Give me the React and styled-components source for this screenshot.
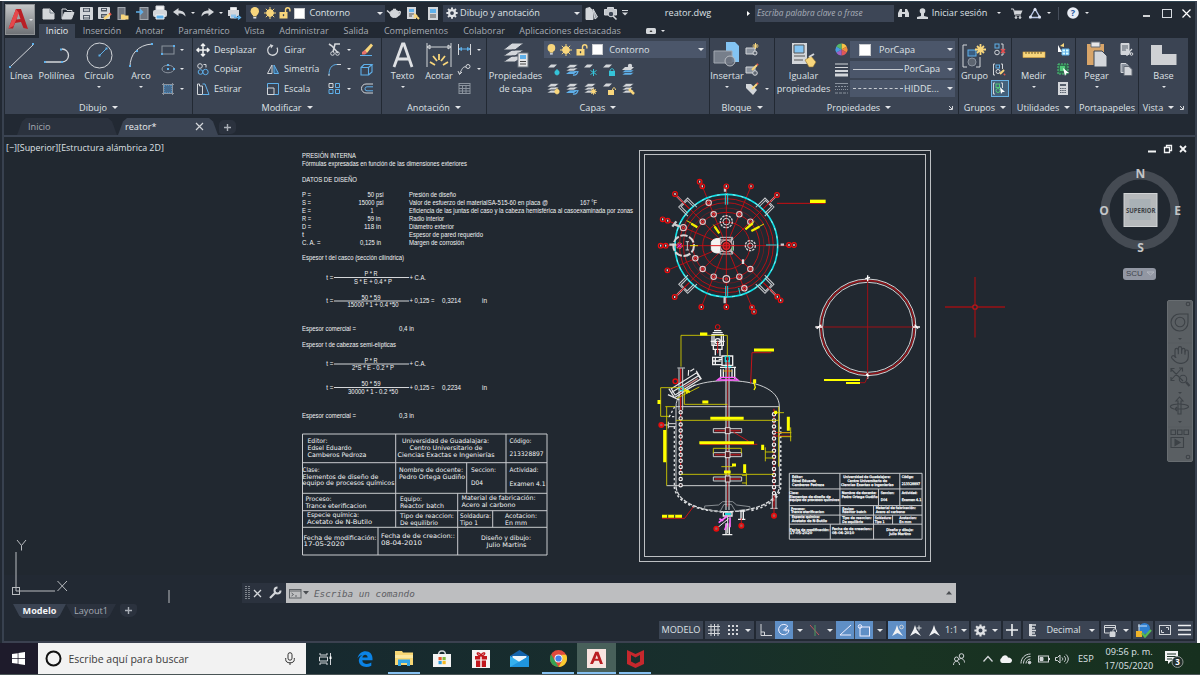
import React from "react";
import styled, { createGlobalStyle, css } from "styled-components";
import { Hand } from "lucide-react";

const L = "#d3d6da";
const B = "#5fb0ea";
const Y = "#f8d67c";
const G = "#8b939e";

const GlobalStyle = createGlobalStyle`
  * { box-sizing: border-box; }
  body {
    margin: 0;
    width: 1200px;
    height: 676px;
    overflow: hidden;
    background: #fff;
    font-family: "Open Sans", "Noto Sans", sans-serif;
  }
  svg { display: block; flex: none; overflow: visible; }
`;
const Desktop = styled.div`
  width: 1200px;
  height: 676px;
  display: flex;
  flex-direction: column;
  padding-top: 1px;
  background: #fff;
  color: #dfe2e6;
  font-size: 9.15px;
  line-height: 12px;
  white-space: nowrap;
`;
const AppWindow = styled.div`
  margin-left: 2px;
  width: 1195px;
  height: 642px;
  display: flex;
  flex-direction: column;
  background: #222933;
  border-left: 2px solid #38414f;
  border-right: 2px solid #38414f;
  border-bottom: 2px solid #3b4150;
  box-shadow: -2px 0 0 #222933;
  clip-path: inset(0 0 0 -2px);
`;
const Header = styled.header`
  display: flex;
  height: 37px;
  flex: none;
  border-top: 1px solid #2d4251;
`;
const AppLogo = styled.div`
  width: 30px;
  height: 31px;
  margin: 2px 4px 0 1px;
  background: linear-gradient(#c3c5c7, #6f7276);
  border: 1px solid #8f9295;
  display: flex;
  align-items: center;
  justify-content: center;
`;
const HeaderRows = styled.div`
  flex: 1;
  display: flex;
  flex-direction: column;
`;
const QuickBar = styled.div`
  height: 22px;
  display: flex;
  align-items: center;
`;
const Slot = styled.div`
  width: ${(p) => p.$w}px;
  flex: none;
  display: flex;
  align-items: center;
  justify-content: center;
`;
const Spacer = styled.div`
  flex: 1;
`;
const Caret = styled.i`
  width: 0;
  height: 0;
  flex: none;
  border: ${(p) => p.$s || 2}px solid transparent;
  border-top-color: #e4e6e9;
  border-bottom: 0;
`;
const QuickCombo = styled.div`
  width: 139px;
  height: 17px;
  flex: none;
  display: flex;
  align-items: center;
  gap: 2px;
  padding: 0 2px 0 3px;
  background: #363f4f;
  font-size: 9.2px;
`;
const SearchBox = styled.div`
  width: 139px;
  height: 17px;
  flex: none;
  margin-left: 5px;
  padding-left: 2px;
  line-height: 16px;
  background: #3d4656;
  color: #a9afb9;
  font-style: italic;
  font-size: 8.3px;
`;
const Divider = styled.div`
  width: 1px;
  height: 13px;
  background: #454d5a;
`;
const TabRow = styled.nav`
  display: flex;
  height: 14px;
  color: #a6abb3;
  font-size: 9px;
`;
const RibbonTab = styled.div`
  width: ${(p) => p.$w}px;
  height: 14px;
  line-height: 14px;
  text-align: center;
  flex: none;
  ${(p) => p.$active && css`
    background: #3b4453;
    color: #eceef0;
  `}
`;
const Ribbon = styled.section`
  display: flex;
  gap: 1px;
  height: 76px;
  flex: none;
  padding-left: 1px;
`;
const Panel = styled.div`
  width: ${(p) => p.$w}px;
  flex: none;
  display: flex;
  flex-direction: column;
  background: #3b4453;
`;
const PanelBody = styled.div`
  display: flex;
  height: 63px;
  padding: 2px 0 0 ${(p) => p.$pad || 0}px;
`;
const PanelTitle = styled.div`
  height: 13px;
  display: flex;
  align-items: center;
  justify-content: center;
  gap: 5px;
  line-height: 13px;
  padding-bottom: 1px;
`;
const BigToolBox = styled.div`
  width: ${(p) => p.$w}px;
  flex: none;
  display: flex;
  flex-direction: column;
  align-items: center;
  text-align: center;
`;
const BigIcon = styled.div`
  height: 30px;
  display: flex;
  align-items: center;
`;
const BigLabel = styled.div`
  line-height: 12.5px;
  margin-bottom: 3px;
`;
const Column = styled.div`
  width: ${(p) => p.$w}px;
  flex: none;
  display: flex;
  flex-direction: column;
`;
const Cell = styled.div`
  height: 19.5px;
  display: flex;
  align-items: center;
  justify-content: ${(p) => (p.$left ? "flex-start" : "center")};
  gap: 5px;
`;
const IconRow = styled.div`
  display: grid;
  grid-template-columns: repeat(5, 18.8px);
  height: 19.5px;
  align-items: center;
  justify-items: center;
`;
const Combo = styled.div`
  height: 17px;
  width: ${(p) => p.$w}px;
  margin: 1px 0 1.5px;
  padding: 0 2px 0 3px;
  display: flex;
  align-items: center;
  gap: ${(p) => p.$gap || 0}px;
  background: #4b566a;
`;
const Swatch = styled.span`
  width: ${(p) => p.$s || 11}px;
  height: ${(p) => p.$s || 11}px;
  background: #fff;
  border: 1px solid #c9cbce;
  flex: none;
`;
const LineSample = styled.span`
  width: 50px;
  border-top: 1px ${(p) => (p.$dashed ? "dashed" : "solid")} #c6cad0;
`;
const ActiveTool = styled.div`
  width: 18px;
  height: 17px;
  display: flex;
  align-items: center;
  justify-content: center;
  background: #45617b;
  border: 1px solid #69b2e4;
`;
const DocTabs = styled.div`
  height: 21px;
  flex: none;
  display: flex;
  align-items: flex-end;
  padding-left: 13px;
`;
const DocTab = styled.div`
  width: ${(p) => p.$w}px;
  height: 17px;
  margin-right: 1px;
  display: flex;
  align-items: center;
  justify-content: space-between;
  padding: 0 ${(p) => (p.$active ? 15 : 6)}px 0 ${(p) => p.$pad}px;
  background: ${(p) => (p.$active ? "#3b4453" : "#2b323e")};
  color: ${(p) => (p.$active ? "#eceef0" : "#a6abb3")};
  clip-path: polygon(0 100%, 5px 20%, 9px 0, calc(100% - 9px) 0, calc(100% - 5px) 20%, 100% 100%);
`;
const AddTab = styled.div`
  width: 17px;
  height: 14px;
  margin-bottom: 1px;
  border-radius: 5px 5px 5px 2px;
  background: #2b323e;
  display: flex;
  align-items: center;
  justify-content: center;
`;
const Canvas = styled.main`
  position: relative;
  height: 440px;
  flex: none;
  border-top: 2px solid #3b4453;
  background: #212830;
`;
const ViewLabel = styled.div`
  position: absolute;
  left: 2px;
  top: 5px;
  font-size: 8.9px;
`;
const Overlay = styled.div`
  position: absolute;
  left: ${(p) => p.$x}px;
  top: ${(p) => p.$y}px;
`;
const NavBar = styled.div`
  position: absolute;
  left: 1163px;
  top: 163px;
  width: 26px;
  height: 162px;
  border-radius: 2px;
  background: #5a5f63;
  border: 1px solid #686d71;
`;
const CommandLine = styled.div`
  position: absolute;
  left: 238px;
  top: 446px;
  width: 714px;
  height: 20px;
  display: flex;
`;
const CommandGrip = styled.div`
  width: 44px;
  display: flex;
  align-items: center;
  gap: 4px;
  padding-left: 3px;
  background: #2b323e;
`;
const CommandInput = styled.div`
  flex: 1;
  display: flex;
  align-items: center;
  gap: 2px;
  padding: 0 4px 0 3px;
  background: #bdbec0;
  color: #5d6064;
  font: italic 9.3px "DejaVu Sans Mono", monospace;
`;
const LayoutTabs = styled.div`
  display: flex;
  height: 46px;
  padding: 29px 0 0 9px;
  flex: none;
`;
const LayoutTab = styled.div`
  width: ${(p) => p.$w}px;
  height: 14px;
  line-height: 13px;
  text-align: center;
  font-weight: ${(p) => (p.$active ? 700 : 400)};
  color: ${(p) => (p.$active ? "#f4f5f6" : "#a6abb3")};
  background: ${(p) => (p.$active ? "#3b4453" : "#2b323e")};
  clip-path: polygon(0 0, 100% 0, calc(100% - 6px) 80%, calc(100% - 9px) 100%, 9px 100%, 6px 80%);
`;
const AddLayout = styled.div`
  width: 17px;
  height: 13px;
  margin-left: 4px;
  border-radius: 2px 3px 7px 7px;
  background: #2b323e;
  display: flex;
  align-items: center;
  justify-content: center;
`;
const StatusBar = styled.footer`
  display: flex;
  gap: 2px;
  justify-content: flex-end;
  height: 18px;
  padding-right: 2px;
  flex: none;
`;
const StatusGroup = styled.div`
  display: flex;
  align-items: center;
  height: 18px;
  background: #3b4453;
`;
const StatusItem = styled.div`
  width: ${(p) => p.$w}px;
  height: 18px;
  display: flex;
  align-items: center;
  justify-content: center;
  gap: 3px;
  background: ${(p) => (p.$on ? "#5f8fc6" : "transparent")};
`;
const Taskbar = styled.div`
  display: flex;
  height: 32px;
  flex: none;
  font-size: 10.5px;
  border-bottom: 1px solid #4a5556;
  background: linear-gradient(90deg, #17292f 306px, #182f2c 700px, #193323 900px, #17301f);
`;
const StartButton = styled.div`
  width: 37.5px;
  background: #1e1b2b;
  display: flex;
  align-items: center;
  justify-content: center;
`;
const TaskSearch = styled.div`
  width: 268.5px;
  background: #f2f2f2;
  color: #3b3b3b;
  display: flex;
  align-items: center;
  gap: 7px;
  padding: 0 11px 0 7px;
`;
const TaskItem = styled.div`
  width: ${(p) => p.$w || 38.75}px;
  height: 31px;
  flex: none;
  display: flex;
  align-items: center;
  justify-content: center;
  background: ${(p) => (p.$on ? "#48605a" : "transparent")};
  box-shadow: ${(p) => (p.$run ? "inset 0 -2px 0 #86c0f0" : "none")};
  margin: ${(p) => (p.$run && !p.$on ? "0 3px" : "0")};
`;
const Language = styled.div`
  width: 22px;
  line-height: 31px;
  font-size: 9.2px;
`;
const Clock = styled.div`
  width: 58px;
  text-align: center;
  font-size: 9.2px;
  line-height: 14px;
  padding-top: 2px;
`;

const Ico = ({ w = 14, h = w, children }) => (
  <svg width={w} height={h} viewBox={`0 0 ${w} ${h}`} fill="none" stroke={L} strokeWidth="1">
    {children}
  </svg>
);

const Bulb = ({ s = 11 }) => (
  <svg width={s * 0.8} height={s} viewBox="0 0 9 12">
    <circle cx="4.5" cy="4.3" r="4.2" fill={Y} />
    <path d="M2.6 7h3.8v2.4H2.6z" fill={Y} />
    <path d="M3 10h3v1.5H3z" fill="#dfe2e6" />
  </svg>
);
const Sun = ({ s = 11 }) => (
  <svg width={s} height={s} viewBox="0 0 12 12" stroke={Y} strokeWidth="1">
    <circle cx="6" cy="6" r="3.4" fill={Y} />
    <path d="M6 0v12M0 6h12M1.8 1.8l8.4 8.4M10.2 1.8l-8.4 8.4" />
  </svg>
);
const Lock = ({ s = 11, c = Y }) => (
  <svg width={s} height={s} viewBox="0 0 12 12">
    <path d="M6.5 6V3a2.2 2.2 0 0 1 4.4 0v1.6" fill="none" stroke={c} strokeWidth="1.4" />
    <rect x="0.5" y="5" width="8" height="6.5" fill={c} />
    <path d="M4.5 7.2v2" stroke="#3b4453" strokeWidth="1.3" />
  </svg>
);
const Gear = ({ s = 13 }) => (
  <svg width={s} height={s} viewBox="0 0 16 16" fill="none" stroke="#e1e3e6">
    <circle cx="8" cy="8" r="4" strokeWidth="3" />
    <g strokeWidth="2.6">
      <path d="M8 .5V3M8 13v2.5M.5 8H3M13 8h2.5M2.7 2.7l1.8 1.8M11.5 11.5l1.8 1.8M2.7 13.3l1.8-1.8M11.5 4.5l1.8-1.8" />
    </g>
  </svg>
);
const Logo = () => (
  <svg width="21" height="23" viewBox="0 0 21 23">
    <path d="M8 1h5l7 20-4.500-1-2.500-6-6 1-2 5.500H.5z" fill="#b91f25" />
    <path d="M.5 20.500 8 1l3 4-5.500 13z" fill="#e5484c" />
    <path d="M10.500 5.500l2 5.500-4 .6z" fill="#a2a4a6" />
  </svg>
);
const Plus = () => (
  <Ico w={7}><path d="M3.500 0v7M0 3.500h7" stroke="#a9aeb6" strokeWidth="1.400" /></Ico>
);

const LayerIcon = ({ kind, c }) => (
  <Ico w={13} h={13}>
    {kind === "one" ? (
      <path d="M1 4.500 4 1.500h6L7 4.500z" fill={L} stroke="none" />
    ) : (
      <g fill={L} stroke="#3b4453" strokeWidth=".6">
        <path d="M0 11l4-3h8l-4 3zM0 8l4-3h8L8 8zM0 5l4-3.500h8L8 5z" />
      </g>
    )}
    {c && <circle cx="10" cy="9.500" r="2.500" fill={c} stroke="none" />}
    {c && <path d="M10 6v6.500" stroke={c} />}
  </Ico>
);
const LayerSwap = () => (
  <Ico w={13}>
    <path d="M0 11l4-3h8l-4 3z" fill={B} stroke="none" />
    <path d="M0 8l4-3h8L8 8zM0 5l4-3.500h8L8 5z" fill={L} stroke="#3b4453" strokeWidth=".6" />
    <path d="M7 12c3 .5 4.500-1 5-4" stroke={B} strokeWidth="1.400" />
  </Ico>
);

const quickIcons = {
  fresh: <Ico w={13}><path d="M1 2h7l4 4v6H1z" fill={L} /><path d="M8 2v4h4" stroke="#777e88" /></Ico>,
  open: <Ico w={13}><path d="M1 11.500V2h4l1 1.500h5V5" /><path d="M1 12l2.500-6.500H13L10.500 12z" fill={L} /></Ico>,
  save: <Ico w={13}><path d="M.5.5h12v12H.5z" fill={L} /><path d="M3 1h7v4H3zM3 8h7v4.500H3z" fill="#4d5663" stroke="none" /><path d="M4 2.300h5M4 3.700h5M4 9.500h5M4 11h5" /></Ico>,
  saveAs: <Ico w={13}><path d="M.5.5h11v11H.5z" fill={L} /><path d="M3 1h6v3.500H3zM3 7h6v4H3z" fill="#4d5663" stroke="none" /><path d="M4 2.500h4M4 9h4" /><path d="m6 12 6-5" stroke={Y} strokeWidth="2.600" /><path d="m11.500 7.500 1.500-1" stroke="#e2574c" strokeWidth="2.600" /></Ico>,
  web: <Ico w={13}><rect x="2" y=".5" width="7" height="12" fill="#70767f" stroke="#a3a8af" /><path d="M5 12.500V7.500h3l1 1h3.500v4z" fill={Y} stroke="none" /></Ico>,
  mobile: <Ico w={13}><rect x="4" y=".5" width="8" height="12" fill="#70767f" stroke="#a3a8af" /><path d="M0 5h6M4 2.500 6.500 5 4 7.500" stroke={B} strokeWidth="1.600" /></Ico>,
  print: <Ico w={14}><path d="M3 0h8v4H3z" fill="#f3f3f3" /><rect x=".5" y="4.500" width="13" height="6" rx="1" fill={L} /><path d="M3 9h8v4H3z" fill={B} stroke="#f3f3f3" /></Ico>,
  undo: <Ico w={13} h={10}><path d="M0 4 5.500 0v2.500c4 0 7 2 7 6-2-2.500-4-3-7-3V8z" fill={L} stroke="none" /></Ico>,
  redo: <Ico w={13} h={10}><path d="M13 4 7.500 0v2.500c-4 0-7 2-7 6 2-2.500 4-3 7-3V8z" fill={L} stroke="none" /></Ico>,
  plot: <Ico w={13}><path d="M2.500.5h6v4h-6z" fill="#f3f3f3" /><rect x=".5" y="3.500" width="10" height="5" fill={L} /><path d="M2.500 7h6v4h-6z" fill="#8fc4ec" /><path d="M6 10.500h6M10 8.500l2.500 2-2.500 2" stroke={B} strokeWidth="1.300" /></Ico>,
  teapot: <Ico w={14} h={10}><ellipse cx="7.500" cy="5.800" rx="4.300" ry="3.700" fill={L} /><path d="M4 6 0 2.500M11 4c3-2 3 2 0 3.500M6 1.500h3" strokeWidth="1.500" /></Ico>,
  sheet: <Ico w={13}><rect x=".5" y=".5" width="8" height="11" fill={L} /><path d="M2 2h5v3H2z" fill={B} stroke="none" /><path d="M2 7h5M2 9h3" stroke="#555" /><path d="m7 7 5 5M7 11l3-3" stroke={Y} strokeWidth="2" /></Ico>,
  props: <Ico w={11} h={13}><rect x=".5" y=".5" width="9" height="12" fill={L} /><path d="M2 2h6v4H2z" fill={B} stroke="none" /><path d="M2 8h6M2 10h6" stroke="#555" /></Ico>,
  pages: <Ico w={13}><path d="M1 1.500 5 .5l3 4v8H1z" fill={L} /><path d="m8 2 4.500 8-2.500 2z" fill="#9ba1a9" /></Ico>,
  preview: <Ico w={13}><path d="M.5 8V2.500h3V.5h6v2h3V8z" fill="#c3c7cc" /><circle cx="7" cy="7" r="2.800" fill="#3b4453" /><path d="m9 9 3.500 3.500" strokeWidth="1.600" /></Ico>,
  find: <Ico w={11} h={10}><path d="M0 9V5l2-4h2v8zM11 9V5L9 1H7v8zM4 4h3v2H4z" fill={L} stroke="none" /></Ico>,
  user: <Ico w={11} h={11}><circle cx="5.500" cy="3" r="2.800" fill={L} stroke="none" /><path d="M4 5h3v3l4 1v2H0V9l4-1z" fill={L} stroke="none" /></Ico>,
  cart: <Ico w={12} h={11}><path d="M0 1h2.500l1.500 6h6" /><path d="M3 2.500h8.500L10 6H4z" fill={L} stroke="none" /><circle cx="5" cy="9.500" r=".9" fill={L} /><circle cx="9" cy="9.500" r=".9" fill={L} /></Ico>,
  cloud: <Ico w={12} h={11}><path d="M6 1 1 9.500h10z" stroke="#b9c6e6" strokeWidth="1.400" /><circle cx="6" cy="1.500" r="1.500" fill="#dfe5f2" stroke="none" /><circle cx="1.500" cy="9" r="1.500" fill="#dfe5f2" stroke="none" /><circle cx="10.500" cy="9" r="1.500" fill="#dfe5f2" stroke="none" /></Ico>,
};

const BigTool = ({ w, icon, label, caret }) => (
  <BigToolBox $w={w}>
    <BigIcon>{icon}</BigIcon>
    <BigLabel>{label}</BigLabel>
    {caret && <Caret />}
  </BigToolBox>
);
const Dot = ({ x, y }) => <rect x={x - 1} y={y - 1} width="2" height="2" fill={B} stroke="none" />;

const Title = ({ children, caret = true, corner, wide }) => (
  <PanelTitle>
    {wide && <Spacer />}
    {children}
    {caret && <Caret $s={3} />}
    {wide && <Spacer />}
    {corner && <Ico w={5}><path d="M1 1l3 3M4.500 1v3.500H1" /></Ico>}
    {wide && <Slot $w={0} />}
  </PanelTitle>
);

const smallDraw = [
  <Ico w={14}><rect x="1" y="3" width="12" height="8" stroke={G} /><Dot x={13} y={3} /><Dot x={1} y={11} /></Ico>,
  <Ico w={14}><ellipse cx="7" cy="7" rx="6" ry="3.800" stroke={G} /><Dot x={7} y={7} /><Dot x={13} y={7} /><Dot x={7} y={3} /></Ico>,
  <Ico w={14}><rect x="3" y="3" width="8" height="8" fill="#456a8e" stroke={B} strokeDasharray="1 1" /><path d="M1 2.500h12M1 11.500h12M2.500 1v12M11.500 1v12" stroke={G} /></Ico>,
];
const modifyA = [
  ["Desplazar", <Ico w={12}><path d="M6 0v12M0 6h12M4 2l2-2 2 2M4 10l2 2 2-2M2 4 0 6l2 2M10 4l2 2-2 2" stroke="#f1f2f3" strokeWidth="1.500" /></Ico>],
  ["Copiar", <Ico w={12}><circle cx="3" cy="3" r="2.300" /><path d="M6.500 1.500h2.500v3" /><circle cx="3.500" cy="9" r="2.300" stroke={B} /><circle cx="8.500" cy="9" r="2.700" stroke={B} /></Ico>],
  ["Estirar", <Ico w={12}><path d="M.5 1v10.500h5V3h-3V1z" /><path d="M5.500 1h2.500l4 10.500H5.500" stroke={B} /></Ico>],
];
const modifyB = [
  ["Girar", <Ico w={12}><path d="M4 1.500a5 5 0 1 0 6 2.200" strokeWidth="1.300" /><path d="m3 0 3.500 1.500L4 4.500z" fill={L} stroke="none" /></Ico>],
  ["Simetría", <Ico w={12}><path d="M5 2v8.500H.5z" /><path d="M7 2v8.500h4.500z" stroke={B} fill="#38648c" /></Ico>],
  ["Escala", <Ico w={12}><path d="M.5.5h11v11H.5z" stroke={B} /><path d="M.5 5h6.500v6.500H.5z" stroke={L} /></Ico>],
];
const modifyC = [
  <Ico w={13}><path d="m1 1 3 2 6 7M12 1H7l-2 8" strokeWidth="1.600" /><circle cx="4.500" cy="10.500" r="1.800" /><circle cx="9.500" cy="10.500" r="1.800" /></Ico>,
  <Ico w={13}><path d="M1 12c0-7 3-10.500 8-10.500" stroke={B} /><path d="M9 1.500h4M1 11v2" stroke={L} /></Ico>,
  <Ico w={13}><path d="M1 1.500h4v4H1z" stroke={L} /><path d="M7.500 1.500h4v4h-4zM1 7.500h4v4H1zM7.500 7.500h4v4h-4z" stroke={B} /></Ico>,
];
const modifyD = [
  <Ico w={13}><path d="m4 8 7-7.500 2 2L7 10z" fill={Y} stroke="none" /><path d="m2 9 3-2 2 3-2 1.500H2z" fill="#e8736b" stroke="none" /><path d="M0 12.500h12" stroke={B} /></Ico>,
  <Ico w={13}><path d="M1 4.500h7.500V12H1zM1 4.500 4 1.500h8l-3.500 3M12 1.500V9l-3.500 3" stroke={B} strokeWidth="1.100" /></Ico>,
  <Ico w={13}><path d="M13 2H6a4.500 4.500 0 0 0 0 9h7" stroke={L} /><path d="M13 4.800H7a2 2 0 0 0 0 4h6" stroke={B} /></Ico>,
];

const LayerRows = () => (
  <>
    <IconRow>
      <LayerIcon kind="one" c="#35c3d8" />
      <LayerSwap />
      <Ico w={13}><path d="M0 4.500 3 1.500h6L6 4.500z" fill={L} stroke="none" /><path d="M9.500 6v7M6.500 7.500l6 4M12.500 7.500l-6 4" stroke="#35c3d8" /></Ico>
      <Ico w={13}><path d="M0 4.500 3 1.500h6L6 4.500z" fill={L} stroke="none" /><rect x="6" y="8" width="6" height="5" fill="#35c3d8" stroke="none" /><path d="M7 8c0-3 4-3 4 0" stroke="#35c3d8" /></Ico>
      <Ico w={13}><path d="M0 12l3-2.500h9L9 12zM0 9.500 3 7h9L9 9.500z" fill={B} stroke="#3b4453" strokeWidth=".5" /><path d="M0 7l3-3h9L9 7z" fill={L} stroke="none" /><circle cx="8" cy="3" r="2.200" fill={L} stroke="none" /></Ico>
    </IconRow>
    <IconRow>
      <LayerIcon c={Y} />
      <LayerSwap />
      <Ico w={13}><path d="M0 11l4-3h8l-4 3zM0 8l4-3h7L8 8zM0 5l4-3.500h8L8 5z" fill={L} stroke="#3b4453" strokeWidth=".6" /><circle cx="9.500" cy="9.500" r="2.300" fill={Y} stroke="none" /><path d="M9.500 6v7M6 9.500h7M7 7l5 5M12 7l-5 5" stroke={Y} strokeWidth=".7" /></Ico>
      <Ico w={13}><path d="M0 4.500 3 1.500h6L6 4.500z" fill={L} stroke="none" /><rect x="5" y="8" width="6" height="5" fill={Y} stroke="none" /><path d="M9.500 8c0-3 3-3 3 0" stroke={Y} /></Ico>
      <Ico w={13}><path d="M0 11l4-3h8l-4 3zM0 8l4-3h7L8 8zM0 5l4-3.500h8L8 5z" fill={L} stroke="#3b4453" strokeWidth=".6" /><path d="m7 7 5 5" stroke={Y} strokeWidth="2.500" /></Ico>
    </IconRow>
  </>
);

const RibbonArea = () => (
  <Ribbon>
    <Panel $w={187}>
      <PanelBody>
        <BigTool w={33} label="Línea" icon={<Ico w={26}><path d="M1 25 25 2" /><Dot x={1} y={25} /><Dot x={24} y={2} /></Ico>} />
        <BigTool w={37} label="Polilínea" icon={<Ico w={26}><path d="M1 20h17a6.500 6.500 0 0 0 0-13" strokeWidth="1.300" /><Dot x={1} y={20} /><Dot x={18} y={20} /><Dot x={17} y={7.500} /></Ico>} />
        <BigTool w={48} label="Círculo" caret icon={<Ico w={27}><circle cx="13.500" cy="13.500" r="12.500" /><path d="m14 13 6-6" stroke={B} /><Dot x={13.500} y={13.500} /><Dot x={20.500} y={6.500} /></Ico>} />
        <BigTool w={36} label="Arco" caret icon={<Ico w={26}><path d="M2 25C2 12 10 3 24 2" /><Dot x={2} y={24} /><Dot x={9} y={9} /><Dot x={24} y={2} /></Ico>} />
        <Column $w={18}>{smallDraw.map((ic, i) => <Cell key={i}>{ic}</Cell>)}</Column>
        <Column $w={10}>{smallDraw.map((_, i) => <Cell key={i}><Caret /></Cell>)}</Column>
      </PanelBody>
      <Title>Dibujo</Title>
    </Panel>
    <Panel $w={188}>
      <PanelBody $pad={4}>
        <Column $w={70}>{modifyA.map(([t, ic]) => <Cell key={t} $left>{ic}{t}</Cell>)}</Column>
        <Column $w={58}>{modifyB.map(([t, ic]) => <Cell key={t} $left>{ic}{t}</Cell>)}</Column>
        <Column $w={18}>{modifyC.map((ic, i) => <Cell key={i}>{ic}</Cell>)}</Column>
        <Column $w={11}>{modifyC.map((_, i) => <Cell key={i}><Caret /></Cell>)}</Column>
        <Column $w={24}>{modifyD.map((ic, i) => <Cell key={i}>{ic}</Cell>)}</Column>
      </PanelBody>
      <Title>Modificar</Title>
    </Panel>
    <Panel $w={104}>
      <PanelBody>
        <BigTool w={41} label="Texto" caret icon={<Ico w={20} h={24}><path d="M1 24 9.500 1h1.500l8 23M4 16h12" stroke="#dfe1e4" strokeWidth="2.800" /></Ico>} />
        <BigTool w={32} label="Acotar" icon={<Ico w={26}><path d="M1 1v24M25 1v24M1 5h24M1 5l3-2v4zM25 5l-3-2v4z" /><path d="M13 12v6M7 14l4 5M19 14l-4 5M4 20l5 3M22 20l-5 3" stroke={Y} strokeWidth="1.800" /></Ico>} />
        <Column $w={19}>
          <Cell><Ico w={13}><path d="M.5 1v11M12.500 1v11" /><path d="M1 6h11M1 6l2.500-1.500v3zM12 6 9.500 4.500v3z" stroke={B} /></Ico></Cell>
          <Cell><Ico w={13}><circle cx="10" cy="3.500" r="2" /><path d="M8 4C5 3 4 6 1.500 11M0 8l1.500 3.500L4 9" /></Ico></Cell>
          <Cell><Ico w={13}><g stroke={G}><rect x="1" y="1.500" width="11" height="10" /><path d="M1 3.500h11M1 6.500h11M1 9h11M4.500 4v7.500M8 4v7.500" /></g></Ico></Cell>
        </Column>
        <Column $w={10}><Cell><Caret /></Cell><Cell><Caret /></Cell></Column>
      </PanelBody>
      <Title>Anotación</Title>
    </Panel>
    <Panel $w={222}>
      <PanelBody>
        <BigTool w={57} label={<>Propiedades<br />de capa</>} icon={
          <Ico w={26}>
            <path d="M0 20l9-6h12l-9 6zM0 14l9-6h12l-9 6zM0 8l9-7h12l-9 7z" fill={L} stroke="#3b4453" />
            <rect x="15" y="11" width="10" height="14" fill="#e4e5e7" stroke="#6d747e" />
            <path d="M17 13h6v4h-6z" fill={B} stroke="none" /><path d="M17 19.500h6M17 22h6" stroke="#444" />
          </Ico>} />
        <Column $w={162}>
          <Combo $w={162} $gap={4}>
            <Bulb /> <Sun s={12} /> <Lock s={12} /> <Swatch />&nbsp;Contorno<Spacer /><Caret $s={3} />
          </Combo>
          <LayerRows />
        </Column>
      </PanelBody>
      <Title>Capas</Title>
    </Panel>
    <Panel $w={64}>
      <PanelBody>
        <BigTool w={34} label="Insertar" caret icon={<Ico w={26}><path d="M12 0h9l4 4v16H12z" fill="#83c4f3" stroke="none" /><path d="M0 9h18v12H0z" fill="#777f8b" stroke="#a2a8b1" /><circle cx="16" cy="19" r="5" fill="#69717dcc" stroke="#b9bdc3" /></Ico>} />
        <Column $w={16}>
          <Cell><Ico w={13}><path d="M0 5h9v6H0z" fill={G} /><circle cx="9" cy="10" r="2" fill="#606873" /><path d="M9.500 0v6M6.500 3h6M7.500 1l4 4M11.500 1l-4 4" stroke={Y} /></Ico></Cell>
          <Cell><Ico w={13}><path d="M0 4h9v6H0z" fill={G} /><circle cx="9" cy="10" r="2.300" fill="#606873" /><path d="m6 7 5-5" stroke={Y} strokeWidth="2" /><path d="m11 2 1-1" stroke="#e2574c" strokeWidth="2" /></Ico></Cell>
          <Cell><Ico w={13}><path d="M0 2h5l6 6-4 5-7-7z" fill={L} stroke="none" /><path d="m6 7 5-5" stroke={Y} strokeWidth="2" /><path d="m11 2 1-1" stroke="#e2574c" strokeWidth="2" /></Ico></Cell>
        </Column>
        <Column $w={13}><Cell /><Cell /><Cell><Caret /></Cell></Column>
      </PanelBody>
      <Title>Bloque</Title>
    </Panel>
    <Panel $w={183}>
      <PanelBody>
        <BigTool w={57} label={<>Igualar<br />propiedades</>} icon={<Ico w={26}><rect x="1" y="1" width="15" height="21" fill={L} stroke="none" /><path d="M3 3h10v8H3z" fill="#83c4f3" stroke="#555" /><path d="M3 14h11M3 18h9" stroke="#555" /><path d="m14 18 6-4 5 6-3 5h-4z" fill={Y} stroke="#8a6d2f" strokeWidth=".6" /><path d="m18 15 5-3" strokeWidth="2" /></Ico>} />
        <Column $w={18}>
          <Cell>
            <Ico w={13}>
              <g stroke="none">
                <path d="M6.500 6.500V.5A6 6 0 0 1 11.700 3.500z" fill="#f6c244" /><path d="M6.500 6.500l5.200-3a6 6 0 0 1 0 6z" fill="#f08a3c" />
                <path d="M6.500 6.500l5.200 3a6 6 0 0 1-5.200 3z" fill="#e0565b" /><path d="M6.500 6.500v6a6 6 0 0 1-5.200-3z" fill="#9a62c8" />
                <path d="M6.500 6.500l-5.200 3a6 6 0 0 1 0-6z" fill="#4a9be0" /><path d="M6.500 6.500 1.300 3.500A6 6 0 0 1 6.500.5z" fill="#54b768" />
              </g>
            </Ico>
          </Cell>
          <Cell><Ico w={13}><path d="M0 1h13M0 4.500h13" /><path d="M0 8h13" strokeWidth="2" /><path d="M0 12h13" strokeWidth="3" /></Ico></Cell>
          <Cell><Ico w={13}><g stroke={G}><path d="M0 1.500h13" /><path d="M0 4.500h13" strokeDasharray="2 1" /><path d="M0 7.500h13" strokeDasharray="1 1" /><path d="M0 11h13" strokeDasharray="3 1" /></g></Ico></Cell>
        </Column>
        <Column $w={105}>
          <Combo $w={105}><Slot $w={24}><Swatch $s={12} /></Slot><Slot $w={40}>PorCapa</Slot><Spacer /><Caret $s={3} /></Combo>
          <Combo $w={105} $gap={1}><LineSample />PorCapa<Spacer /><Caret $s={3} /></Combo>
          <Combo $w={105} $gap={1}><LineSample $dashed />HIDDE...<Spacer /><Caret $s={3} /></Combo>
        </Column>
      </PanelBody>
      <Title corner wide>Propiedades</Title>
    </Panel>
    <Panel $w={52}>
      <PanelBody>
        <BigTool w={31} label="Grupo" icon={<Ico w={26}><path d="M5 3H1v22h4M14 25h4V15" /><rect x="6" y="8" width="8" height="6" stroke={B} fill="#3a5d80" /><circle cx="10" cy="20" r="4" fill="#5d6570" stroke={G} /><path d="M18.500 2v11M13 7.500h11M15 4l7 7M22 4l-7 7" stroke={Y} strokeWidth="1.800" /></Ico>} />
        <Column $w={19}>
          <Cell><Ico w={13}><rect x="2" y="1" width="4" height="4" stroke={B} /><circle cx="4" cy="9.500" r="2.300" /><path d="M8 1h2v11H8" /><path d="m8 6 4 4M12 6l-4 4" stroke="#ea4a4a" strokeWidth="1.500" /></Ico></Cell>
          <Cell><Ico w={13}><path d="M2 1H.5v11H2M8 1h1.500v5" /><rect x="3" y="2" width="3.500" height="3" stroke={B} /><circle cx="5" cy="8.500" r="2" /><path d="m7 11 4-4" stroke={Y} strokeWidth="2" /><path d="m11 12 1-1" stroke="#e2574c" strokeWidth="2" /></Ico></Cell>
          <Cell><ActiveTool><Ico w={13}><path d="M2 1H.5v11H2M8 1h1.500v5" /><rect x="3" y="2" width="3.500" height="3.500" stroke="#52c878" /><circle cx="5" cy="8.500" r="2" stroke="#52c878" /><path d="m7 5 5 5H9.500L8 12z" fill="#fff" stroke="none" /></Ico></ActiveTool></Cell>
        </Column>
      </PanelBody>
      <Title>Grupos</Title>
    </Panel>
    <Panel $w={63}>
      <PanelBody>
        <BigTool w={43} label="Medir" caret icon={<Ico w={22} h={6}><rect width="22" height="5.500" fill={Y} stroke="#e0a93f" strokeWidth=".6" /><path d="M3 0v2M6 0v2M9 0v2M12 0v2M15 0v2M18 0v2" stroke="#6d5a2a" /></Ico>} />
        <Column $w={16}>
          <Cell><Ico w={13}><path d="M5 6h7v6H5z" fill="#dff" stroke={B} /><path d="M5 9h7M8.500 6v6" stroke={B} /><path d="m1 2 4 7H1z" fill="#fff" stroke="none" /><path d="m3 3 4-3v4z" fill={Y} stroke="none" /></Ico></Cell>
          <Cell><Ico w={13}><rect x="1" y="1" width="10" height="10" stroke="#4fc878" strokeDasharray="2 1" fill="#2f6b4e" /><path d="M3 3h5v5H3z" fill="#4fc878" stroke="none" /><path d="m6 5 6 5H9.500L8 13z" fill="#fff" stroke="none" /></Ico></Cell>
          <Cell><Ico w={10} h={13}><rect x=".5" y=".5" width="9" height="12" fill={L} /><path d="M2 2h6v2H2z" fill="#555e6b" stroke="none" /><path d="M2 6.500h6M2 8.500h6M2 10.500h6" stroke="#555e6b" strokeDasharray="1.500 .7" /></Ico></Cell>
        </Column>
      </PanelBody>
      <Title>Utilidades</Title>
    </Panel>
    <Panel $w={62}>
      <PanelBody>
        <BigTool w={41} label="Pegar" caret icon={<Ico w={22} h={26}><rect x="1" y="2" width="17" height="21" fill="#d8a569" stroke="none" /><path d="M5 0h9v5H5z" fill="#e6e7e9" stroke="#656c77" /><path d="M8 9h8l5 5v11H8z" fill={L} stroke="#3b4453" /></Ico>} />
        <Column $w={18}>
          <Cell><Ico w={13}><path d="M1 .5h8v11H1z" fill={L} /><path d="M2 3h6M2 5h6M2 7h4" stroke="#555e6b" /><path d="m6 6 5 5M12 6l-5 5" strokeWidth="1.300" /><circle cx="7" cy="11" r="1.300" /><circle cx="11.500" cy="11" r="1.300" /></Ico></Cell>
          <Cell><Ico w={13}><path d="M1 .5h5l2 2v7H1z" fill={G} /><path d="M4 3.500h5l3 3v6H4z" fill={L} stroke="#656c77" /></Ico></Cell>
        </Column>
      </PanelBody>
      <Title caret={false}>Portapapeles</Title>
    </Panel>
    <Panel $w={49}>
      <PanelBody>
        <BigTool w={49} label="Base" caret icon={<Ico w={26} h={20}><path d="M0 0h11v9h14.500v11H0z" fill="#cfd1d4" stroke="none" /></Ico>} />
      </PanelBody>
      <Title corner>Vista</Title>
    </Panel>
  </Ribbon>
);

/* text that keeps the width the drawing gives it */
const Txt = ({ x, y, w, children, anchor, size = 6.3 }) => (
  <text
    x={x}
    y={y}
    fontSize={size}
    textAnchor={anchor}
    textLength={w}
    lengthAdjust="spacingAndGlyphs"
  >
    {children}
  </text>
);

const notes = [
  [302, 158, 54, "PRESIÓN INTERNA"],
  [302, 165.7, 165, "Fórmulas expresadas en función de las dimensiones exteriores"],
  [302, 181.6, 55, "DATOS DE DISEÑO"],
  [302, 197.400, 9, "P ="],
  [302, 205, 9, "S ="],
  [302, 213.200, 9, "E ="],
  [302, 221.200, 9, "R ="],
  [302, 229, 9, "D ="],
  [302, 237.200, 2, "t"],
  [302, 244.600, 18.500, "C. A. ="],
  [367.500, 197.400, 16, "50 psi"],
  [358.500, 205, 25, "15000 psi"],
  [370.500, 213.200, 3, "1"],
  [367.500, 221.200, 13, "59 in"],
  [364, 229, 17, "118 in"],
  [360, 244.600, 21, "0,125 in"],
  [409, 197.400, 47, "Presión de diseño"],
  [409, 205, 139, "Valor de esfuerzo del materialSA-515-60 en placa @"],
  [580, 205, 17, "167 °F"],
  [409, 213.200, 224, "Eficiencia de las juntas del caso y la cabeza hemisférica al casoexaminada por zonas"],
  [409, 221.200, 35, "Radio interior"],
  [409, 229, 45, "Diámetro exterior"],
  [409, 237.200, 74, "Espesor de pared requerido"],
  [409, 244.600, 55, "Margen de corrosión"],
  [302, 260.200, 102, "Espesor t del casco (sección cilíndrica)"],
  [302, 331, 54, "Espesor comercial ="],
  [399, 331, 15, "0,4 in"],
  [302, 347, 94, "Espesor t de cabezas semi-elípticas"],
  [302, 417.500, 54, "Espesor comercial ="],
  [399, 417.500, 15, "0,3 in"],
];
const fractions = [
  { y: 277.500, top: "P * R", tw: 13, bottom: "S * E + 0.4 * P", bw: 38 },
  { y: 301, top: "50 * 59", tw: 19, bottom: "15000 * 1 + 0.4 *50", bw: 51, result: "0,3214" },
  { y: 364, top: "P * R", tw: 13, bottom: "2*S * E - 0.2 * P", bw: 42 },
  { y: 387.500, top: "50 * 59", tw: 19, bottom: "30000 * 1 - 0.2 *50", bw: 50, result: "0,2234" },
];
const Calculations = () => (
  <g fill="#f2f3f4" fontFamily="Liberation Sans, Arial, sans-serif">
    {notes.map(([x, y, w, t], i) => <Txt key={i} x={x} y={y} w={w}>{t}</Txt>)}
    {fractions.map((f) => (
      <g key={f.y}>
        <Txt x={326.300} y={f.y + 2.200} w={7}>t =</Txt>
        <path d={`M334 ${f.y}h75`} stroke="#d5d7d9" />
        <Txt x={371} y={f.y - 1.500} w={f.tw} anchor="middle">{f.top}</Txt>
        <Txt x={373} y={f.y + 6.400} w={f.bw} anchor="middle">{f.bottom}</Txt>
        {f.result ? (
          <>
            <Txt x={409.500} y={f.y + 2.200} w={25}>+ 0,125 =</Txt>
            <Txt x={442} y={f.y + 2.200} w={19}>{f.result}</Txt>
            <Txt x={482} y={f.y + 2.200} w={5}>in</Txt>
          </>
        ) : (
          <Txt x={409.500} y={f.y + 2.200} w={16.500}>+ C.A.</Txt>
        )}
      </g>
    ))}
  </g>
);

const blockTexts = [
  [307.500, 443, 20, "Editor:"], [307.500, 450, 44, "Edsel Eduardo"], [307.500, 457, 59, "Camberos Pedroza"],
  [402, 442.500, 87, "Universidad de Guadalajara:"], [409.500, 449.500, 73, "Centro Universitario de"], [397.500, 456.500, 97, "Ciencias Exactas e Ingenierías"],
  [509.500, 442.500, 22, "Código:"], [509.500, 456, 34, "213328897"],
  [302.500, 471.500, 17, "Clase:"], [302.500, 478.500, 76, "Elementos de diseño de"], [302.500, 485.200, 92, "equipo de procesos químicos"],
  [399, 471.500, 64, "Nombre de docente:"], [399, 478.500, 66, "Pedro Ortega Gudiño"],
  [471, 471.500, 25, "Seccion:"], [471, 485, 12, "D04"], [509.500, 471.500, 29, "Actividad:"], [509.500, 485.500, 36, "Examen 4.1"],
  [305.500, 500.500, 26, "Proceso:"], [305.500, 507.500, 61, "Trance eterificacion"],
  [400, 500.500, 22, "Equipo:"], [400, 507.500, 44, "Reactor batch"],
  [461.500, 499.500, 74, "Material de fabricación:"], [461.500, 506.500, 54, "Acero al carbono"],
  [307, 516.500, 52, "Especie química:"], [307, 523.500, 65, "Acetato de N-Butilo"],
  [400, 518, 54, "Tipo de reaccion:"], [400, 524.500, 38, "De equilibrio"],
  [460, 518, 31, "Soldadura:"], [460, 524.500, 18, "Tipo 1"],
  [505, 518, 32, "Acotacion:"], [505, 524.500, 22, "En mm"],
  [303.500, 539.500, 73, "Fecha de modificación:"], [303.500, 546, 41, "17-05-2020"],
  [381, 538, 74, "Fecha de de creacion::"], [381, 545, 41, "08-04-2010"],
  [481, 540, 50, "Diseño y dibujo:"], [486.500, 547, 40, "Julio Martins"],
];
const TitleBlock = ({ heavy }) => (
  <g>
    <path
      d="M302.500 555V434H547V555H302.500M302.500 462.700H547M302.500 493.300H547M302.500 510.700H547M302.500 527.300H547M395.700 434v93.300M506 434v59.300M466.700 462.700v30.600M457.700 493.300V555M492.700 510.700v16.600M378 527.300V555"
      stroke="#c9cbce"
      fill="none"
      vectorEffect="non-scaling-stroke"
    />
    <g
      fill="#f4f5f6"
      stroke={heavy ? "#f4f5f6" : "none"}
      strokeWidth=".5"
      fontFamily="DejaVu Sans, sans-serif"
    >
      {blockTexts.map(([x, y, w, t], i) => <Txt key={i} x={x} y={y} w={w} size={6.300}>{t}</Txt>)}
    </g>
  </g>
);

const bubbles = [
  [179, 95], [187, 109], [259, 109], [333, 109], [411, 135], [447, 285], [462, 285], [412, 440], [422, 451],
  [336, 472], [342, 485], [259, 471], [184, 471], [104, 441], [82, 361], [62, 287], [77, 287], [68, 208], [83, 212], [105, 132],
];
const nozzles = [
  [206, 158], [221, 193], [188, 215], [298, 193], [331, 215], [166, 325], [188, 357], [221, 380],
  [259, 387, 10], [298, 380], [331, 357], [313, 415], [130, 233, 9],
];
const Bubble = ({ x, y }) => (
  <g>
    <circle cx={x} cy={y} r="7" stroke="#f00c0c" strokeWidth="3.500" />
    <path d={`M${x} ${y - 3}v6`} stroke="#ddd" strokeWidth="4" />
  </g>
);
const TopView = () => (
  <g transform="translate(640 150) scale(.33333)" fill="none" strokeWidth="3">
    <g stroke="#cc0d12">
      {[141, 129, 113, 100, 71].map((r) => <circle key={r} cx="259" cy="287" r={r} strokeWidth={r === 113 ? 1.2 : 2.6} />)}
      <path d="M77 287H447M259 109V471M187 109l72 178 77 185M333 109l-74 178-75 184M105 132l154 155 153 153M411 135 259 287 104 441M83 212l176 75L82 361M259 287l72 71" strokeWidth="2.600" />
      <path d="M411 160H556" />
    </g>
    <circle cx="259" cy="287" r="154" stroke="#12e0e6" strokeWidth="5" />
    <circle cx="259" cy="287" r="154" stroke="#e8f5f5" strokeWidth="3" strokeDasharray="8 16" opacity=".6" />
    <path d="M256 130v34M263 130v34M378 285h32M257 408v32M263 408v32M296 414l5 22" stroke="#1fd6dd" />
    <g stroke="#c9cbce" strokeWidth="3">
      {[45, 135, 225, 315].map((a) => (
        <g key={a} transform={`rotate(${a} 259 287)`}>
          <path d="M246 136V108h26v28M240 143V104h38v39" />
          <path d="M259 100V78" strokeWidth="6" />
          <path d="M259 130V78" stroke="#c40d12" />
        </g>
      ))}
      <path d="M255 125v-12M254 442v18M422 284h10M88 284h20M97 230l12-16M100 222l20 8" strokeWidth="7" />
      <path d="M142 275v25M137 275h10M137 300h10" />
    </g>
    {nozzles.map(([x, y, r = 8]) => (
      <g key={`${x}-${y}`}>
        <circle cx={x} cy={y} r={r} fill="#212830" stroke="#e8c6c8" strokeWidth="3.500" />
        <circle cx={x} cy={y} r="3.500" stroke="#e9262b" strokeWidth="3.500" />
      </g>
    ))}
    <g stroke="#d8d5d5">
      <circle cx="259" cy="215" r="18" strokeWidth="4" strokeDasharray="7 3" /><circle cx="259" cy="215" r="10" />
      <circle cx="331" cy="287" r="15" strokeWidth="4" strokeDasharray="7 3" /><circle cx="331" cy="287" r="8" />
      <circle cx="131" cy="287" r="31" strokeWidth="6" strokeDasharray="22 5" />
    </g>
    <circle cx="118" cy="287" r="9" fill="#b91846" stroke="#d8a11f" strokeDasharray="5 4" />
    <path d="M112 281l12 12M124 281l-12 12" stroke="#d42ad4" />
    <path d="M214 276c4-8 14-12 26-10v42c-12 3-22-1-26-9z" fill="#f3f3f3" stroke="#f3f3f3" />
    <path d="M240 262h38v8h-38zM240 304h38v8h-38zM274 264v46M280 272v30" stroke="#c9cbce" strokeWidth="3" />
    <circle cx="259" cy="288" r="18" fill="#2c1c22" stroke="#c6a6a8" strokeWidth="3.500" />
    <circle cx="259" cy="288" r="10" fill="#84151b" stroke="#e3262b" strokeWidth="3.500" />
    <path d="M212 287h73M259 262v52" stroke="#e31b20" strokeWidth="3" />
    <path d="M277 290v12" stroke="#3bbf5a" strokeWidth="3" />
    <path d="M309 328v14" stroke="#ddd" strokeWidth="7" />
    <path d="M154 221l18 11M224 230l14 20M316 238l22-18M334 243l24-13" stroke="#f4f000" strokeWidth="7" />
    <path d="M140 212l20 11M220 224l8 10M336 220l7-6M355 231l17-9M150 287h24" stroke="#e8d800" strokeWidth="3" />
    <path d="M510 154h47" stroke="#ffff00" strokeWidth="10" />
    {bubbles.map(([x, y]) => <Bubble key={`${x}-${y}`} x={x} y={y} />)}
  </g>
);

const SideView = () => (
  <g transform="translate(640 310) scale(.33333)" fill="none" strokeWidth="2.800">
    {/* shell ring detail */}
    <g>
      <circle cx="683" cy="52" r="140" stroke="#8f1419" strokeWidth="5" />
      <circle cx="683" cy="52" r="145" stroke="#d0d2d4" strokeWidth="3" />
      <circle cx="683" cy="52" r="135" stroke="#d0d2d4" strokeWidth="3" />
      <path d="M530 51H835M683-90V195" stroke="#a80f14" />
      <path d="M526 51h22M818 51h22M683-104v18M683 190v16" stroke="#fff" strokeWidth="4" />
      <path d="M530 56l14-12M824 44l10 12M676-94l14-4M678 192l10 6" stroke="#fff" strokeWidth="4" />
      <path d="M683 200l-8 18h-15" stroke="#a80f14" />
      <path d="M552 210h108M618 219h42" stroke="#ffff00" strokeWidth="6" />
    </g>

    {/* heads and shell */}
    <g stroke="#d9dbdd">
      <path d="M108 290C108 235 180 212 262 212S418 235 418 290M108 290V530M418 290V530" />
      <path d="M108 530C112 580 190 605 262 605S414 580 418 530" strokeWidth="4" strokeDasharray="12 4" />
      <path d="M108 290H418M80 527H418" />
      <path d="M104 290l-16 30h18M103 350V530" strokeDasharray="7 7" strokeWidth="4" />
      <path d="M422 350V530C420 560 390 590 330 602M103 530c5 50 70 72 150 76" strokeWidth="5" strokeDasharray="7 7" />
      <path d="M194 600v-12l42-3 12-10h30l12 10 40 5v10M210 600l30 5 12-22h22l12 20 30-5" stroke="#8f9499" />
    </g>
    <path d="M122 175V490M402 296V590" stroke="#d01217" strokeWidth="3.500" />
    <g stroke="#f4f4f4" strokeWidth="3.500" fill="#3a2a32">
      {Array.from({ length: 13 }, (_, i) => <circle key={i} cx="122" cy={307 + i * 18.200} r="5" />)}
      {Array.from({ length: 14 }, (_, i) => <circle key={i} cx="402" cy={313 + i * 18.200} r="5" />)}
    </g>
    <path d="M117 175v125M128 175v125M112 174h23M397 555v40M408 555v40M391 595h22" stroke="#d9dbdd" />

    {/* shaft and impellers */}
    <path d="M258 150V600M267 150V600" stroke="#cfd1d4" strokeWidth="3.500" />
    <path d="M263 160V590" stroke="#a5151b" />
    {[362, 434, 507].map((y) => (
      <g key={y}>
        <path d={`M220 ${y - 6}h85v12h-85z`} stroke="#d9dbdd" />
        <path d={`M224 ${y}h78`} stroke="#a1171c" strokeWidth="5" />
        <rect x="256" y={y - 9} width="14" height="18" fill="#551b22" stroke="#e6e6e6" />
      </g>
    ))}

    {/* motor and gearbox */}
    <circle cx="233" cy="51" r="7" stroke="#e80c0c" strokeWidth="3" />
    <g stroke="#f0f0f0" strokeWidth="4">
      <path d="M218 68h30M222 62h22M216 74h34v32h-34zM220 106h26v12h-26zM226 118v18M240 118v20M212 94h42M222 76v28M244 76v28" />
      <circle cx="233" cy="94" r="8" />
      <path d="M218 142h28v22h-28zM246 138h32v28h-32zM226 142v22M236 148h12M218 153h24M240 172h48M242 178v28M284 172v34M250 178v24M276 178v24" />
    </g>
    <path d="M256 140h12v14h-12zM254 170h20" stroke="#1fd6dd" strokeWidth="4" />
    <path d="M232 210l10-8h42l10 8z" stroke="#ff5cff" strokeWidth="4" />
    <path d="M250 183h26" stroke="#e0a000" />
    <path d="M233 94v36M263 140v60" stroke="#d01217" strokeWidth="3" />

    {/* manhole */}
    <g transform="rotate(-32 137 228)" stroke="#e9e9e9" strokeWidth="3.500">
      <path d="M92 222h94M96 212h90v22H96zM92 240h72M90 208v30M188 206v30M160 206l10-14M172 198h14" />
      <path d="M120 228h60" stroke="#d98888" />
      <circle cx="122" cy="228" r="6" stroke="#3bd3df" />
    </g>
    <path d="M84 254l34 16" stroke="#eee" strokeWidth="4" />
    <circle cx="106" cy="214" r="7" stroke="#e80c0c" strokeWidth="4" />
    <path d="M132 240l18 6M138 250l10-8" stroke="#f4f000" strokeWidth="6" />

    {/* side nozzles and bottom outlet */}
    <path d="M85 335v20M85 341h22M85 350h22M64 345h20" stroke="#e9e9e9" />
    <path d="M298 603h18M303 604v22M310 604v22M294 628h22M247 674h30M258 640v34M268 640v34M250 606h26v12h-26z" stroke="#f0f0f0" strokeWidth="4" />
    <path d="M255 612h18" stroke="#1fd6dd" strokeWidth="6" />
    <path d="M262 618l-26 20M250 632l-12-6M262 640l-8 20M270 622v30" stroke="#ff6fff" strokeWidth="5" />
    <path d="M266 626l-32 26M263 620v50" stroke="#e9e9e9" strokeWidth="3" />
    <path d="M405 368h45M405 378h45" stroke="#d01217" />
    <g stroke="#d01217">
      <path d="M160 590l-26 35H66M332 220l4-92h58M280 366l46 28M180 403h172M304 645v-20M402 612v-20" />
    </g>
    {[[64, 345], [229, 656], [304, 647], [402, 617]].map(([x, y]) => (
      <circle key={x} cx={x} cy={y} r="6.500" stroke="#e80c0c" strokeWidth="5" fill="#9d5a5a" />
    ))}

    {/* dimensions */}
    <g stroke="#d6d000" strokeWidth="2.600">
      <path d="M123 170V76H262V140M62 233h62M62 233v86h25M80 290v237M76 290h30M133 235v48H262M108 331H416M122 493H402M416 290v180M220 430v-15h84v15M376 426h26M376 444h26M376 412v42M420 368h34M420 380h34M452 352v42M244 470h34M306 496h14M306 519h14M319 490v36M406 308h26M110 265l68-34" />
    </g>
    <g stroke="#ffff00" strokeWidth="9">
      <path d="M180 72h22M342 120h60M187 276h18M211 325h100M178 398h164M66 619h60M252 486h20M276 465h12" />
      <path d="M74 360v97M445 320v42M314 463v26M57 270v12M368 404v16M344 208v12M407 302v10" />
    </g>
    <path d="M83 614v10M104 614v10" stroke="#212830" strokeWidth="3" />
    <path d="M340 212l6 20-4 8" stroke="#f4f000" strokeWidth="4" />
  </g>
);

const Drawing = () => (
  <svg width="1191" height="436" viewBox="4 137 1191 436" fill="none">
    <Calculations />
    <TitleBlock />
    <g stroke="#bdc0c3">
      <rect x="639.500" y="150.500" width="291" height="411" />
      <rect x="644.500" y="154.500" width="281" height="402" />
    </g>
    <TopView />
    <SideView />
    <g transform="translate(789.300 473.300) scale(.543 .545) translate(-302.500 -434)">
      <TitleBlock heavy />
    </g>
    <g stroke="#9a1115" strokeWidth="1.300">
      <path d="M945 307h27.500M977.500 307H1005M975 277v27.500M975 309.500V337.500" />
      <circle cx="975" cy="307" r="2.200" stroke="#c01418" />
    </g>
    <g stroke="#b9bcc0">
      <path d="M16 552v39M16 591h39" />
      <rect x="12.500" y="587.500" width="7" height="7" />
      <path d="M17 540l4.500 5.500 4.500-5.500M21.500 545.500v5M57.500 581l9.500 10M67 581l-9.500 10" />
      <path d="M169 590v13" />
    </g>
  </svg>
);

const Compass = () => (
  <svg width="90" height="90" viewBox="0 0 90 90" fill="none" fontFamily="Open Sans, sans-serif">
    <circle cx="44" cy="44" r="35" stroke="#454b53" strokeWidth="9" />
    <rect x="28" y="27.500" width="33" height="33" fill="#b6b9bb" stroke="#d2d4d5" />
    <rect x="33.500" y="33" width="21" height="21" fill="#a9b1b6" />
    <g fill="#c3c5c7" fontWeight="700" fontSize="12" textAnchor="middle">
      <text x="44.500" y="12">N</text>
      <text x="44.500" y="86">S</text>
      <text x="8" y="49">O</text>
      <text x="81.500" y="49">E</text>
    </g>
    <text x="30" y="47" fill="#3e4347" fontSize="7.500" fontWeight="700" textLength="29.500" lengthAdjust="spacingAndGlyphs">SUPERIOR</text>
  </svg>
);

const Ucs = styled.div`
  width: 33px;
  height: 12px;
  border-radius: 3px;
  background: #9297a3;
  color: #3f444d;
  font: 8px/12px "Liberation Sans", sans-serif;
  display: flex;
  align-items: center;
  padding-left: 3px;
  gap: 4px;
`;

const NavIcons = () => (
  <svg width="24" height="160" viewBox="0 0 24 160" fill="none" stroke="#3d4247" strokeWidth="1.100">
    <circle cx="20" cy="3" r="1.800" />
    <path d="M12 13h8v8a8.500 8.500 0 1 1-8-8z" /><circle cx="12" cy="21" r="4.800" />
    <Hand x={2} y={44} width={20} height={20} color="#3d4247" strokeWidth={1.400} />
    <path d="M3 68l12 12M14 67 3 79M3 71v-3.500h3.500M11 67h3.500v3.500M3 76v3.500h3.500" /><circle cx="15" cy="78" r="3.700" /><path d="m18 81 3.500 4" strokeWidth="2.200" />
    <path d="M10 113V100H8l3.500-4 3.500 4h-2v13zM6 108c-7-2-3-5 5-5s14 3 5 5H7l2-2M7 108l2 2" />
    <path d="M3 129h4.500v4.500H3zM9.500 129h4.500v4.500H9.500zM16 129h4.500v4.500H16zM3 136.500h12.500v10H3z" /><path d="M7 138.500v6l5-3z" fill="#3d4247" />
    <g fill="#3d4247" stroke="none">
      <path d="M10 37h4l-2 2zM10 91h4l-2 2zM10 120h4l-2 2z" />
    </g>
    <circle cx="20" cy="156" r="1.800" />
    <path d="M0 42h24M0 126h24" stroke="#555a5f" strokeWidth=".6" />
  </svg>
);

const DocButtons = () => (
  <svg width="42" height="10" viewBox="0 0 42 10" fill="none" stroke="#f3f4f5" strokeWidth="1.500">
    <path d="M0 7.500h8" strokeWidth="2" />
    <path d="M16.500 3.500h5v5h-5zM18.500 3V1.500h5v5h-1.500" strokeWidth="1.300" />
    <path d="m32 2 6 6M38 2l-6 6" strokeWidth="1.800" />
  </svg>
);

const Person = ({ plus, dot }) => (
  <Ico w={13}>
    <path d="M6 1 7.500 5.500 12 12 6.500 9 1 12 4.500 5.500z" fill="#f0f1f3" stroke="none" />
    {plus && <path d="M10 1.500v5M7.500 4h5" />}
    {dot && <circle cx="10.500" cy="3" r="1.800" />}
  </Ico>
);

const Status = () => (
  <StatusBar>
    <StatusGroup><StatusItem $w={44}>MODELO</StatusItem></StatusGroup>
    <StatusGroup>
      <StatusItem $w={18}><Ico w={12}><path d="M3 0v12M6.500 0v12M10 0v12M0 2.500h12M0 6h12M0 9.500h12" /></Ico></StatusItem>
      <StatusItem $w={19}><Ico w={10}><path d="M0 1h10M0 5h10M0 9h10" strokeWidth="2" strokeDasharray="2 2" /></Ico></StatusItem>
      <StatusItem $w={12}><Caret $s={3} /></StatusItem>
    </StatusGroup>
    <StatusGroup>
      <StatusItem $w={19}><Ico w={12}><path d="M1 0v11.500h11M1 8h3.500v3.500" /></Ico></StatusItem>
      <StatusItem $w={18} $on><Ico w={12}><path d="M10 2.500A5.200 5.200 0 1 0 11 6H5.500L10 2M8 3.500v4" stroke="#eef" /></Ico></StatusItem>
      <StatusItem $w={13}><Caret $s={3} /></StatusItem>
      <StatusItem $w={17}><Ico w={12}><path d="m1 1 9 10" stroke="#c0565c" /><path d="M6 1v11" stroke="#4a9b63" /></Ico></StatusItem>
      <StatusItem $w={13}><Caret $s={3} /></StatusItem>
      <StatusItem $w={18} $on><Ico w={12}><path d="M12 1 1 11h11" stroke="#eef" /></Ico></StatusItem>
      <StatusItem $w={1} />
      <StatusItem $w={18} $on><Ico w={12}><rect x="2" y="3" width="9.500" height="9" stroke="#eef" /><circle cx="2" cy="2.500" r="1.800" stroke="#eef" /></Ico></StatusItem>
      <StatusItem $w={13}><Caret $s={3} /></StatusItem>
    </StatusGroup>
    <StatusGroup>
      <StatusItem $w={18} $on><Person dot /></StatusItem>
      <StatusItem $w={19}><Person plus /></StatusItem>
      <StatusItem $w={18}><Person /></StatusItem>
      <StatusItem $w={26}>1:1<Caret $s={3} /></StatusItem>
    </StatusGroup>
    <StatusGroup><StatusItem $w={18}><Gear s={13} /></StatusItem><StatusItem $w={12}><Caret $s={3} /></StatusItem></StatusGroup>
    <StatusGroup><StatusItem $w={18}><Ico w={12}><path d="M6 0v12M0 6h12" stroke="#eef0f2" strokeWidth="1.600" /></Ico></StatusItem></StatusGroup>
    <StatusGroup>
      <StatusItem $w={19}><Ico w={7} h={12}><path d="M1.500 0v12" strokeWidth="3" /><path d="M1 1h6M1 4h5M1 6.500h6M1 9h5M1 11.500h6" strokeWidth="1.500" /></Ico></StatusItem>
      <StatusItem $w={43}>Decimal</StatusItem>
      <StatusItem $w={14}><Caret $s={3} /></StatusItem>
    </StatusGroup>
    <StatusGroup>
      <StatusItem $w={19}><Ico w={13}><path d="M5 9H.5V1.500h11V5M.5 3.500h11" /><path d="M6 8h5v4.500H6z" fill={L} /><path d="M9 8V6.500c0-2 3.500-2 3.500 0V8" /></Ico></StatusItem>
      <StatusItem $w={11}><Caret $s={3} /></StatusItem>
    </StatusGroup>
    <StatusGroup><StatusItem $w={20}><Ico w={15}><circle cx="8.500" cy="5.500" r="5.500" fill="#2f7fd0" stroke="none" /><path d="M2 3h9M3 1v10" stroke="#cfe3f6" /><path d="M0 8h6v6H0z" fill="#f0b429" stroke="none" /><path d="m6 10 3 3.500 6-6.500" stroke="#55b957" strokeWidth="2.300" /></Ico></StatusItem></StatusGroup>
    <StatusGroup>
      <StatusItem $w={20}><Ico w={12} h={10}><rect x=".5" y=".5" width="11" height="9" /><path d="M7 2.500h2.500V5M5 7.500H2.500V5" /></Ico></StatusItem>
      <StatusItem $w={18}><Ico w={13} h={12}><path d="M0 1.500h13M0 6h13M0 10.500h13" stroke="#eef0f2" strokeWidth="1.500" /></Ico></StatusItem>
    </StatusGroup>
  </StatusBar>
);

const Windows = () => (
  <Taskbar>
    <StartButton><Ico w={13}><path d="M0 2l5.700-.8V6H0zM6.400 1.100 13 0v6H6.400zM0 6.800h5.700v4.900L0 11zM6.400 6.800H13V13l-6.600-1z" fill="#fff" stroke="none" /></Ico></StartButton>
    <TaskSearch>
      <Ico w={17}><circle cx="8.500" cy="8.500" r="7" stroke="#111" strokeWidth="2" /></Ico>
      Escribe aquí para buscar
      <Spacer />
      <Ico w={10} h={13}><rect x="3" y=".7" width="4" height="7.500" rx="2" stroke="#333" /><path d="M.7 6v1.500a4.300 3.300 0 0 0 8.600 0V6M5 11v2" stroke="#333" /></Ico>
    </TaskSearch>
    <TaskItem $w={38}><Ico w={13} h={12}><path d="M1 0v2h7V0M1 12v-2h7v2M.5 4h8v4h-8zM11.500 0v12" /><path d="M11.500 3.500v2.500" stroke="#fff" strokeWidth="2" /></Ico></TaskItem>
    <TaskItem $w={41}><Ico w={16}><path d="M.5 7.500C1.500 2.500 5 .3 8.500.3 13 .3 15.500 3.500 15.500 7.500v1.800H5.300c.2 4.200 5.700 4.700 9 2.300v3.200C9 17.500 1.800 15.500 1.800 9.300 2 6.500 4 4.700 5.500 4 3 4.300 1.300 5.800.5 7.500zM5.400 6.400h5.200c0-3.600-4.700-3.400-5.200 0z" fill="#0b83e6" stroke="none" /></Ico></TaskItem>
    <TaskItem $w={32} $run><Ico w={18} h={15}><path d="M0 0h7l1 1.500h10V14H0z" fill="#f7d774" stroke="none" /><path d="M0 4h18v3H0z" fill="#fbe8a0" stroke="none" /><path d="M3 15V8.500h12V15h-3v-3H6v3z" fill="#34a6e6" stroke="none" /></Ico></TaskItem>
    <TaskItem><Ico w={18}><path d="M5.500 5c0-5.500 7-5.500 7 0" strokeWidth="1.500" /><path d="M0 4h18v13H0z" fill="#f4f4f4" stroke="none" /><path d="M5.500 7h3.200v3.200H5.500z" fill="#e8552f" stroke="none" /><path d="M9.500 7h3.200v3.200H9.500z" fill="#7fb93c" stroke="none" /><path d="M5.500 11h3.200v3.200H5.500z" fill="#2a9fe0" stroke="none" /><path d="M9.500 11h3.200v3.200H9.500z" fill="#f6b921" stroke="none" /></Ico></TaskItem>
    <TaskItem><Ico w={18}><path d="M0 0h18v18H0z" fill="#f6f3f3" stroke="none" /><path d="M3 6h12v3.500H3zM4 10.500h10V17H4z" fill="#c2161d" stroke="none" /><path d="M9 6v11" stroke="#f6f3f3" strokeWidth="1.500" /><path d="M9 6C3 5 5 0 9 5c4-5 6 0 0 1z" stroke="#c2161d" strokeWidth="1.300" /></Ico></TaskItem>
    <TaskItem><Ico w={19} h={17}><path d="M0 6 9.500 0 19 6v11H0z" fill="#1463ab" stroke="none" /><path d="M2.500 6h14v6h-14z" fill="#eef5fa" stroke="none" /><path d="M0 6l9.500 6L19 6v11H0z" fill="#35b0ee" stroke="none" /><path d="M0 17 19 6v11z" fill="#1f94dd" stroke="none" /></Ico></TaskItem>
    <TaskItem $w={32} $run>
      <Ico w={17}>
        <g stroke="none">
          <circle cx="8.500" cy="8.500" r="8.500" fill="#e04a3c" />
          <path d="M1.100 4.300 5 11l3.500 6A8.500 8.500 0 0 1 1.100 4.300z" fill="#35a353" />
          <path d="M8.500 17 12.500 10l-1-5.200h4.700A8.500 8.500 0 0 1 8.500 17z" fill="#f9cb30" />
          <circle cx="8.500" cy="8.500" r="4" fill="#f4f6fa" />
          <circle cx="8.500" cy="8.500" r="3.100" fill="#4280ea" />
        </g>
      </Ico>
    </TaskItem>
    <TaskItem $run $on><Ico w={19}><path d="M0 0h19v19H0z" fill="#f8e3df" stroke="none" /><g transform="translate(2.500 2) scale(.72)"><path d="M8 1h4.400l6.300 17h-4l-1.700-4.400H7L4.800 18H.8z" fill="#b91d22" stroke="none" /><path d="M10 5.500l2.100 5.400H8z" fill="#f8e3df" stroke="none" /></g></Ico></TaskItem>
    <TaskItem $w={32} $run><Ico w={17}><path d="M0 0l8.500 4L17 0v14l-8.500 4L0 14zM4 5v6.500l4.500 2.200 4.500-2.200V5L8.500 7.500z" fill="#c5282d" fillRule="evenodd" stroke="none" /></Ico></TaskItem>
    <Spacer />
    <Slot $w={26}><Ico w={12}><circle cx="3.500" cy="6" r="2" /><circle cx="8.500" cy="3" r="2.300" /><path d="M.5 12c0-5 6-5 6 0M5.500 7c2-3 6-1 6 2.500" /></Ico></Slot>
    <Slot $w={32}><Ico w={10} h={6}><path d="m.5 5.500 4.500-5 4.500 5" strokeWidth="1.300" /></Ico></Slot>
    <Slot $w={2}><Ico w={13} h={8}><path d="M3 8a2.800 2.800 0 0 1-.5-5C4-.5 8-.5 9 2.500c3 0 4 2 4 3s-1 2.500-2.500 2.500z" fill="#f2f3f4" stroke="none" /></Ico></Slot>
    <Slot $w={38}><Ico w={11}><path d="M1 10.500C1 5 5 1 10.500 1M3.500 10.500c0-4 3-7 7-7M6 10.500C6 8 8 6 10.500 6" /><circle cx="9.500" cy="9.500" r="1.300" fill={L} /></Ico></Slot>
    <Slot $w={0}><Ico w={12} h={8}><rect x=".5" y="1" width="10" height="6" /><path d="M2 2.500h3v3H2z" fill={L} /><path d="M11.500 3v2" /></Ico></Slot>
    <Slot $w={34}><Ico w={13} h={10}><path d="M.5 3.500h2L5 1v8L2.500 6.500h-2zM7 3.500c1 1 1 2 0 3M9 2c2 2 2 4 0 6M11 .5c3 3 3 6 0 9" /></Ico></Slot>
    <Language>ESP</Language>
    <Clock>09:56 p. m.<br />17/05/2020</Clock>
    <Slot $w={32}>
      <svg width="19" height="20" viewBox="0 0 19 20">
        <path d="M0 2h13v10H6l-3 3v-3H0z" fill="#f3f4f4" />
        <path d="M2 5h9M2 7.500h9M2 10h5" stroke="#1a3325" />
        <circle cx="12.500" cy="13" r="5.500" fill="#23302c" stroke="#8c9691" />
        <text x="12.500" y="16" fontSize="8" fontWeight="700" textAnchor="middle" fill="#fff">3</text>
      </svg>
    </Slot>
    <Slot $w={10} />
  </Taskbar>
);

const tabs = [
  [36, "Inicio"], [54, "Inserción"], [42, "Anotar"], [66, "Paramétrico"], [35, "Vista"], [64, "Administrar"],
  [40, "Salida"], [80, "Complementos"], [56, "Colaborar"], [116, "Aplicaciones destacadas"],
];

const App = () => (
  <Desktop>
    <GlobalStyle />
    <AppWindow>
      <Header>
        <AppLogo><Logo /><Caret /></AppLogo>
        <HeaderRows>
          <QuickBar>
            <Slot $w={18}>{quickIcons.fresh}</Slot>
            <Slot $w={20}>{quickIcons.open}</Slot>
            <Slot $w={18}>{quickIcons.save}</Slot>
            <Slot $w={18}>{quickIcons.saveAs}</Slot>
            <Slot $w={18}>{quickIcons.web}</Slot>
            <Slot $w={22}>{quickIcons.mobile}</Slot>
            <Slot $w={14}>{quickIcons.print}</Slot>
            <Slot $w={24}>{quickIcons.undo}</Slot>
            <Slot $w={4}><Caret /></Slot>
            <Slot $w={24}>{quickIcons.redo}</Slot>
            <Slot $w={4}><Caret /></Slot>
            <Slot $w={23}>{quickIcons.plot}</Slot>
            <QuickCombo>
              <Slot $w={12}><Bulb s={12} /></Slot><Slot $w={13}><Sun s={12} /></Slot><Slot $w={14}><Lock s={12} /></Slot><Swatch />
              &nbsp;Contorno<Spacer /><Caret $s={3} />
            </QuickCombo>
            <Slot $w={18}>{quickIcons.teapot}</Slot>
            <Slot $w={20}>{quickIcons.sheet}</Slot>
            <Slot $w={20}>{quickIcons.props}</Slot>
            <QuickCombo><Gear s={12} />Dibujo y anotación<Spacer /><Caret $s={3} /></QuickCombo>
            <Slot $w={18}>{quickIcons.pages}</Slot>
            <Slot $w={20}>{quickIcons.preview}</Slot>
            <Slot $w={10}><Ico w={6} h={6}><path d="M0 .5h6" /><path d="M0 2.500h6L3 5.500z" fill={L} stroke="none" /></Ico></Slot>
            <Slot $w={116}>reator.dwg</Slot>
            <Slot $w={4}><Ico w={3} h={5}><path d="M0 0v5l3-2.500z" fill="#fff" stroke="none" /></Ico></Slot>
            <SearchBox>Escriba palabra clave o frase</SearchBox>
            <Slot $w={18}>{quickIcons.find}</Slot>
            <Slot $w={20}>{quickIcons.user}</Slot>
            <Slot $w={55}>Iniciar sesión</Slot>
            <Slot $w={24}><Caret /></Slot>
            <Slot $w={12}>{quickIcons.cart}</Slot>
            <Slot $w={24}>{quickIcons.cloud}</Slot>
            <Slot $w={4}><Caret /></Slot>
            <Slot $w={14}><Divider /></Slot>
            <Slot $w={16}>
              <svg width="12" height="12" viewBox="0 0 12 12">
                <circle cx="6" cy="6" r="5.800" fill="#e9edf5" />
                <text x="6" y="9.200" fontSize="9" fontWeight="700" textAnchor="middle" fill="#27599f">?</text>
              </svg>
            </Slot>
            <Slot $w={12}><Caret /></Slot>
            <Spacer />
            <Slot $w={20}><Ico w={8} h={8}><path d="M0 7h7" stroke="#fff" strokeWidth="1.600" /></Ico></Slot>
            <Slot $w={20}><Ico w={10} h={9}><rect x=".5" y=".5" width="9" height="8" stroke="#d6dae0" /></Ico></Slot>
            <Slot $w={18}><Ico w={9}><path d="m.5.5 8 8M8.500.5l-8 8" stroke="#fff" strokeWidth="1.200" /></Ico></Slot>
          </QuickBar>
          <TabRow>
            {tabs.map(([w, t], i) => <RibbonTab key={t} $w={w} $active={i === 0}>{t}</RibbonTab>)}
            <Slot $w={13} />
            <Slot $w={20}><Ico w={10} h={6}><rect width="10" height="6" rx="1.500" fill={L} stroke="none" /><path d="M3.500 4h3L5 2z" fill="#333" stroke="none" /></Ico></Slot>
            <Slot $w={4}><Caret /></Slot>
          </TabRow>
        </HeaderRows>
      </Header>
      <RibbonArea />
      <DocTabs>
        <DocTab $w={100} $pad={11}>Inicio</DocTab>
        <DocTab $w={100} $pad={7} $active>
          reator*
          <Ico w={7}><path d="m0 0 7 7M7 0 0 7" strokeWidth="1.200" /></Ico>
        </DocTab>
        <AddTab><Plus /></AddTab>
      </DocTabs>
      <Canvas>
        <Drawing />
        <ViewLabel>[−][Superior][Estructura alámbrica 2D]</ViewLabel>
        <Overlay $x={1144} $y={7}><DocButtons /></Overlay>
        <Overlay $x={1092} $y={29}><Compass /></Overlay>
        <Overlay $x={1119} $y={131}><Ucs>SCU<Ico w={7} h={4}><path d="m0 0 3.500 3L7 0z" stroke="#b3b7c0" /></Ico></Ucs></Overlay>
        <NavBar><NavIcons /></NavBar>
        <CommandLine>
          <CommandGrip>
            <Ico w={5} h={14}><path d="M1 0v14M4 0v14" strokeDasharray="1 1" /></Ico>
            <Ico w={7}><path d="m0 0 7 7M7 0 0 7" strokeWidth="1.300" /></Ico>
            <Slot $w={20}><Ico w={12}><path d="M1 11 7 5" strokeWidth="2.200" /><path d="M11.500 3.500A3 3 0 1 1 8.500.500" strokeWidth="2" /></Ico></Slot>
          </CommandGrip>
          <CommandInput>
            <Ico w={12} h={9}><rect x=".5" y=".5" width="11.500" height="8.500" stroke="#5e6266" /><path d="M1 2h11M2.500 4l2 1.500-2 1.500M6 7h2" stroke="#5e6266" /></Ico>
            <Ico w={6} h={4}><path d="M0 0h6L3 3.500z" fill="#4b4e52" stroke="none" /></Ico>
            <Slot $w={1} />
            <span>Escriba un comando</span>
            <Spacer />
            <Ico w={6} h={4}><path d="M0 3.500h6L3 0z" fill="#4b4e52" stroke="none" /></Ico>
          </CommandInput>
        </CommandLine>
      </Canvas>
      <LayoutTabs>
        <LayoutTab $w={53} $active>Modelo</LayoutTab>
        <LayoutTab $w={50}>Layout1</LayoutTab>
        <AddLayout><Plus /></AddLayout>
      </LayoutTabs>
      <Status />
    </AppWindow>
    <Windows />
  </Desktop>
);

export default App;
